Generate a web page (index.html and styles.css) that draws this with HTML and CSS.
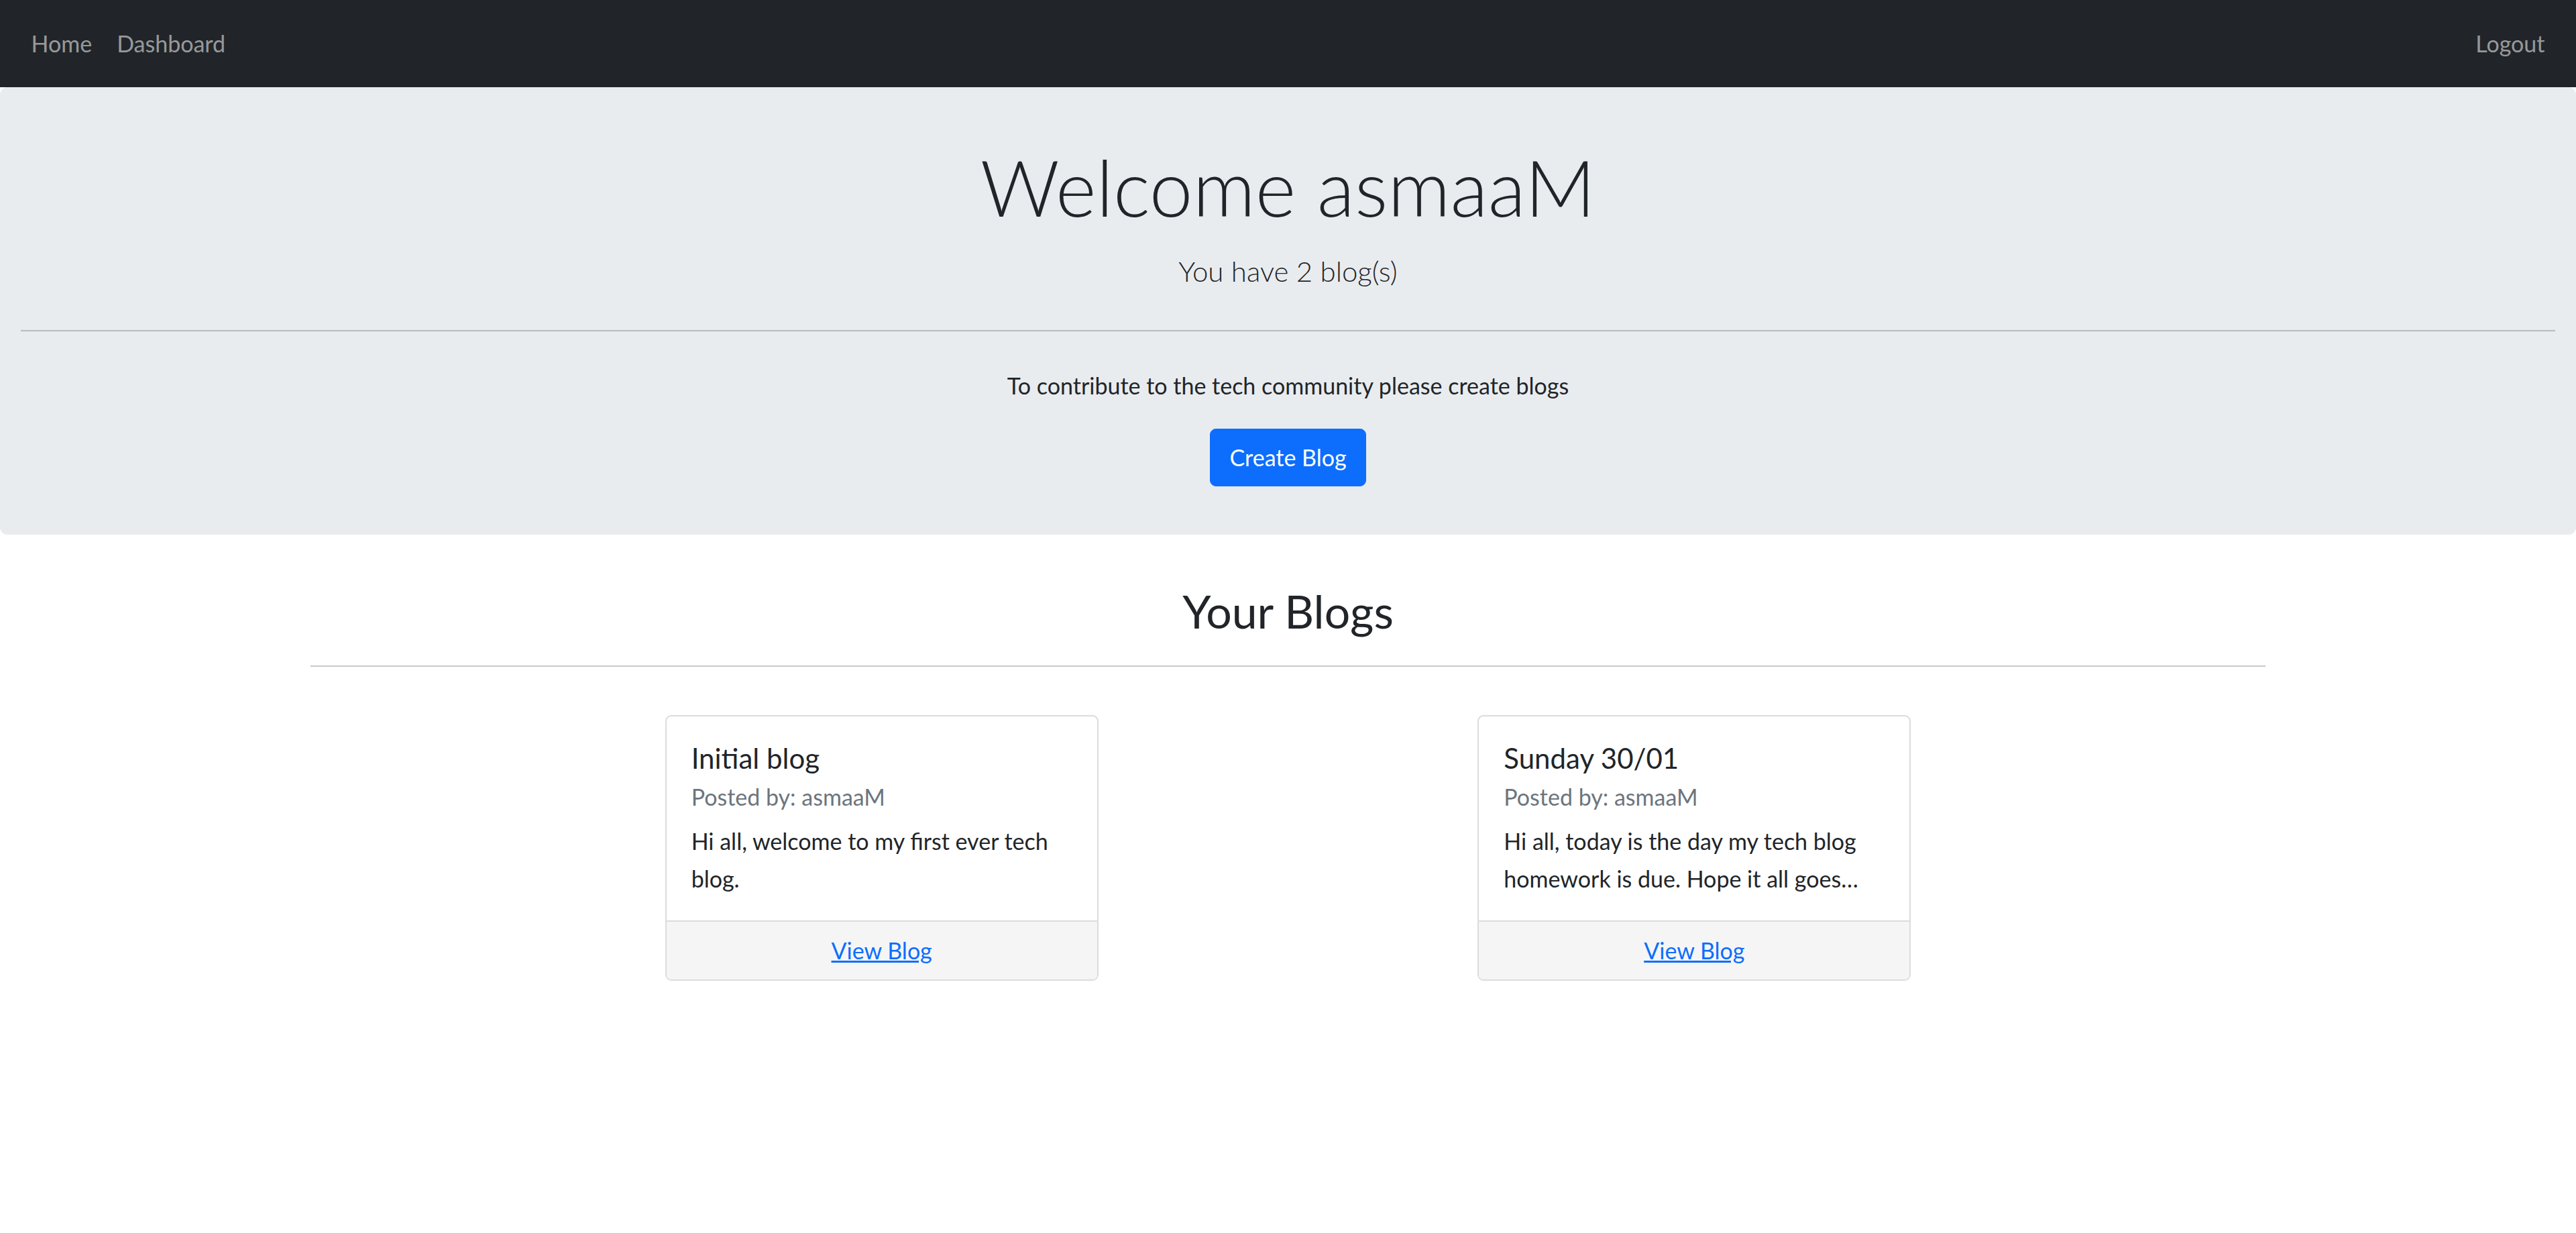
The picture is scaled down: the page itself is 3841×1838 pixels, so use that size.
FILE: index.html
```html
<!DOCTYPE html>
<html lang="en">
<head>
<meta charset="utf-8">
<title>Dashboard</title>
<link rel="stylesheet" href="styles.css">
</head>
<body>
<nav class="navbar">
  <div class="nav-left">
    <a class="nav-link" href="#">Home</a>
    <a class="nav-link" href="#">Dashboard</a>
  </div>
  <div class="nav-right">
    <a class="nav-link" href="#">Logout</a>
  </div>
</nav>

<header class="jumbotron">
  <h1 class="display">Welcome asmaaM</h1>
  <p class="lead">You have 2 blog(s)</p>
  <hr class="jumbo-rule">
  <p class="intro">To contribute to the tech community please create blogs</p>
  <a class="btn-primary" href="#">Create Blog</a>
</header>

<main class="container">
  <h2 class="section-title">Your Blogs</h2>
  <hr class="section-rule">
  <div class="cards">
    <article class="card">
      <div class="card-body">
        <h5 class="card-title">Initial blog</h5>
        <h6 class="card-subtitle">Posted by: asmaaM</h6>
        <p class="card-text">Hi all, welcome to my first ever tech blog.</p>
      </div>
      <div class="card-footer"><a href="#">View Blog</a></div>
    </article>
    <article class="card">
      <div class="card-body">
        <h5 class="card-title">Sunday 30/01</h5>
        <h6 class="card-subtitle">Posted by: asmaaM</h6>
        <p class="card-text">Hi all, today is the day my tech blog homework is due. Hope it all goes…</p>
      </div>
      <div class="card-footer"><a href="#">View Blog</a></div>
    </article>
  </div>
</main>
</body>
</html>
```

FILE: styles.css
```css
* { box-sizing: border-box; }

html, body {
  margin: 0;
  padding: 0;
  background: #ffffff;
}

body {
  font-family: "Lato", "Noto Sans", sans-serif;
  font-size: 34px;
  line-height: 55.6px;
  color: #212529;
}

/* NAVBAR */
.navbar {
  height: 130px;
  background: #212529;
  display: flex;
  align-items: center;
  justify-content: space-between;
  padding: 0 28px;
}

.nav-left, .nav-right {
  display: flex;
}

.nav-link {
  color: rgba(255, 255, 255, 0.55);
  text-decoration: none;
  padding: 0 18.5px;
  font-size: 34px;
  line-height: 55.6px;
}

/* JUMBOTRON */
.jumbotron {
  background: #e9ecef;
  border-radius: 11px;
  padding: 73px 31px 72px;
  text-align: center;
}

.display {
  margin: 0 0 16px;
  font-size: 116px;
  font-weight: 300;
  line-height: 151px;
}

.lead {
  margin: 0;
  font-size: 42px;
  font-weight: 300;
  line-height: 69px;
}

.jumbo-rule {
  margin: 53px 0;
  border: 0;
  border-top: 2px solid rgba(33, 37, 41, 0.25);
  height: 0;
}

.intro {
  margin: 0 0 36.4px;
}

.btn-primary {
  display: inline-block;
  height: 86px;
  line-height: 84px;
  padding: 0 28px;
  background: #0d6efd;
  border: 1px solid #0d6efd;
  border-radius: 9px;
  color: #ffffff;
  text-decoration: none;
  font-size: 34px;
  vertical-align: top;
}

/* MAIN */
.container {
  width: 2915px;
  margin: 0 auto;
}

.section-title {
  margin: 69px 0 37px;
  text-align: center;
  font-size: 68px;
  font-weight: 400;
  line-height: 89px;
}

.section-rule {
  margin: 0 0 72px;
  border: 0;
  border-top: 2px solid rgba(33, 37, 41, 0.25);
  height: 0;
}

.cards {
  display: flex;
  justify-content: space-evenly;
}

.card {
  width: 646px;
  margin: 0 37px;
  border: 2px solid #dcdcdc;
  border-radius: 9px;
  overflow: hidden;
  background: #ffffff;
}

.card-body {
  padding: 35px 37px 34px;
}

.card-title {
  margin: 0 0 8px;
  font-size: 42px;
  font-weight: 400;
  line-height: 55px;
}

.card-subtitle {
  margin: 0 0 16px;
  font-size: 34px;
  font-weight: 400;
  line-height: 44.5px;
  color: #6c757d;
}

.card-text {
  margin: 0;
}

.card-footer {
  border-top: 2px solid #dcdcdc;
  background: #f5f5f5;
  padding: 15px 37px 16px;
  text-align: center;
  line-height: 55px;
}

.card-footer a {
  color: #0d6efd;
  text-decoration: underline;
}
```
